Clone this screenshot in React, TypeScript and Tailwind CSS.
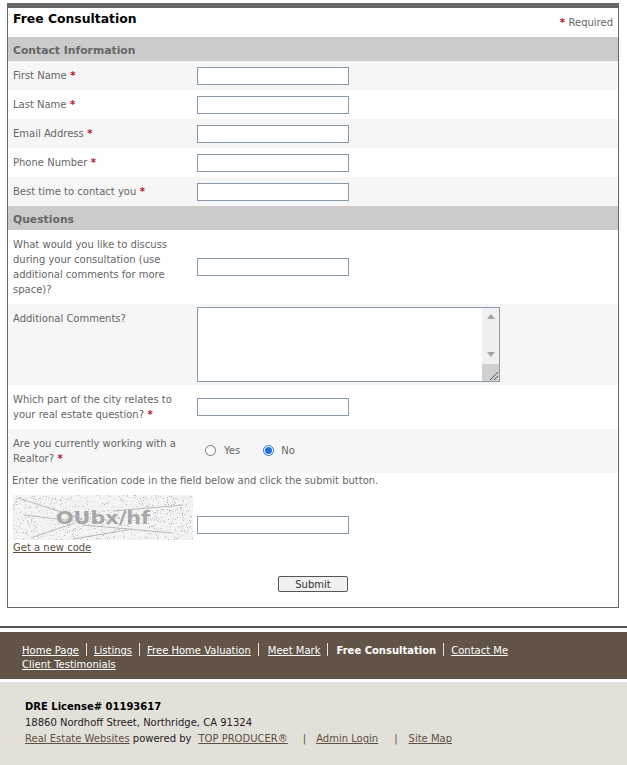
import React from 'react';

// captcha noise, fixed seed so the picture stays the same
let seed = 17;
const rnd = () => {
  seed = (seed * 16807) % 2147483647;
  return seed / 2147483647;
};
const dots = Array.from({ length: 800 }, () => ({
  x: Math.floor(rnd() * 180),
  y: Math.floor(rnd() * 45),
  o: 0.12 + rnd() * 0.5,
}));

const Req = () => <span className="text-[#b5132e] font-bold"> *</span>;

const Field = ({ className = '' }: { className?: string }) => (
  <input
    type="text"
    className={`block w-[152px] h-[18px] bg-white border border-[#8a99a8] ${className}`}
  />
);

const Section = ({ title }: { title: string }) => (
  <div className="h-6 bg-[#cbcbcb] pl-[5px] pt-[3px] flex items-center text-[10.8px] font-bold text-[#666666]">{title}</div>
);

const Row = ({ label, alt }: { label: string; alt?: boolean }) => (
  <div className={`h-[29px] flex items-center pl-[5px] ${alt ? 'bg-[#f6f6f6]' : 'bg-white'}`}>
    <div className="w-[184px]">
      {label}
      <Req />
    </div>
    <Field />
  </div>
);

const Captcha = () => (
  <svg width="180" height="45" className="block bg-[#f3f3f3]">
    <path d="M5 3 L70 24 M12 20 L60 26 M20 42 L62 28 M70 30 L160 38 M100 16 L170 10 M60 44 L120 34" stroke="#bbbbbb" strokeWidth="1" fill="none" />
    <text x="43" y="29" fontFamily="'DejaVu Sans', sans-serif" fontSize="18" fontWeight="700" fill="#a8a8a8" textLength="94" lengthAdjust="spacingAndGlyphs">OUbx/hf</text>
    {dots.map((d, i) => (
      <rect key={i} x={d.x} y={d.y} width="1" height="1" fill="#8a8a8a" opacity={d.o} />
    ))}
  </svg>
);

const Sep = () => <span className="inline-block w-px h-[13px] bg-[#e6e1da] mx-[7px] align-[-2px]" />;

export default function App() {
  return (
    <div className="w-[627px] h-[765px] overflow-hidden bg-white font-['DejaVu_Sans',Verdana,sans-serif] text-[10px] leading-[15px] text-[#666666]">
      <div className="pt-[3px] pl-[7px] pr-2">
        <div className="border-x border-b border-[#666666] border-t-[5px] h-[605px]">
          <div className="h-[29px] flex justify-between pl-[5px] pr-[5px] bg-white">
            <div className="text-[12.4px] leading-[20px] pt-[1px] font-bold text-black">Free Consultation</div>
            <div className="pt-[7px]">
              <span className="text-[#b5132e] font-bold">* </span>Required
            </div>
          </div>
          <Section title="Contact Information" />
          <Row label="First Name" alt />
          <Row label="Last Name" />
          <Row label="Email Address" alt />
          <Row label="Phone Number" />
          <Row label="Best time to contact you" alt />
          <Section title="Questions" />
          <div className="h-[74px] flex items-center pl-[5px]">
            <div className="w-[184px] pr-5">
              What would you like to discuss during your consultation (use additional comments for more space)?
            </div>
            <Field />
          </div>
          <div className="h-[81px] flex items-start pl-[5px] pt-[3px] bg-[#f6f6f6]">
            <div className="w-[184px] pt-1">Additional Comments?</div>
            <div className="w-[303px] h-[75px] border border-[#8a99a8] bg-white flex justify-end">
              <div className="w-[17px] h-full bg-[#f0f0f0] flex flex-col items-center">
                <span className="mt-[6px] w-0 h-0 border-x-[4px] border-x-transparent border-b-[5px] border-b-[#a3a3a3]" />
                <span className="mt-[33px] w-0 h-0 border-x-[4px] border-x-transparent border-t-[5px] border-t-[#a3a3a3]" />
                <div className="mt-auto w-full h-[17px] bg-[#cfcfcf] flex items-end justify-end">
                  <svg width="10" height="10" viewBox="0 0 10 10" stroke="#555555" strokeWidth="1" fill="none">
                    <path d="M1 9 L9 1 M5 9 L9 5" />
                  </svg>
                </div>
              </div>
            </div>
          </div>
          <div className="h-11 flex items-center pl-[5px]">
            <div className="w-[184px] pr-2">
              Which part of the city relates to your real estate question?
              <Req />
            </div>
            <Field />
          </div>
          <div className="h-11 flex items-center pl-[5px] bg-[#f6f6f6]">
            <div className="w-[184px] pr-2">
              Are you currently working with a Realtor?
              <Req />
            </div>
            <div className="flex items-center -mt-px">
              <span className="ml-2 w-[11px] h-[11px] rounded-full border border-[#767676] bg-white" />
              <span className="ml-[8px]">Yes</span>
              <span className="ml-[23px] w-[11px] h-[11px] rounded-full border border-[#2a6fd6] bg-white flex items-center justify-center">
                <span className="w-[7px] h-[7px] rounded-full bg-[#1f6fe0]" />
              </span>
              <span className="ml-[7px]">No</span>
            </div>
          </div>
          <div className="pl-1 h-[22px] bg-white">Enter the verification code in the field below and click the submit button.</div>
          <div className="flex items-end pl-[5px]">
            <div className="w-[184px]">
              <Captcha />
            </div>
            <Field className="mb-[6px]" />
          </div>
          <div className="pl-[5px]">
            <a className="underline text-[#5e4f3f]">Get a new code</a>
          </div>
          <div className="flex pl-[270px] pt-[21px]">
            <button className="w-[70px] h-4 rounded-[2px] border border-[#555555] bg-[#f0f0f0] text-[10px] leading-[15px] text-[#333333]">
              Submit
            </button>
          </div>
        </div>
      </div>
      <div className="mt-[18px] h-[2px] bg-[#4d5358]" />
      <div className="mt-1 h-[47px] bg-[#625446] pl-[22px] pt-[11px] text-white leading-[14px]">
        <a className="underline">Home Page</a>
        <Sep />
        <a className="underline">Listings</a>
        <Sep />
        <a className="underline">Free Home Valuation</a>
        <Sep />
        <a className="underline ml-0.5">Meet Mark</a>
        <Sep />
        <span className="font-bold ml-px">Free Consultation</span>
        <Sep />
        <a className="underline">Contact Me</a>
        <br />
        <a className="underline">Client Testimonials</a>
      </div>
      <div className="mt-[3px] h-[83px] bg-[#e3dfd9] pl-[25px] pt-[17px] text-[#222222] leading-4">
        <div className="font-bold text-black">DRE License# 01193617</div>
        <div>18860 Nordhoff Street, Northridge, CA 91324</div>
        <div>
          <a className="underline text-[#5e4f3f]">Real Estate Websites</a> powered by
          <a className="underline text-[#5e4f3f] ml-[7px]">TOP PRODUCER®</a>
          <span className="text-[#5e4f3f] ml-[15px] mr-[10px]">|</span>
          <a className="underline text-[#5e4f3f]">Admin Login</a>
          <span className="text-[#5e4f3f] ml-[16px] mr-[11px]">|</span>
          <a className="underline text-[#5e4f3f]">Site Map</a>
        </div>
      </div>
    </div>
  );
}
